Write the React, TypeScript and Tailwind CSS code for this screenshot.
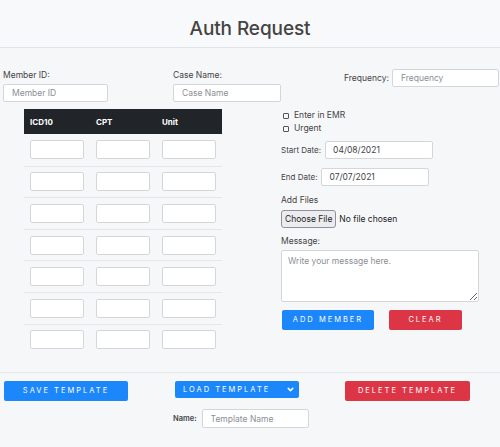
import { ChevronDown } from "lucide-react";

const rows = [0, 1, 2, 3, 4, 5, 6];

function TextInput({ placeholder, className }: { placeholder?: string; className: string }) {
  return (
    <input
      placeholder={placeholder}
      className={`bg-white border border-[#d3d7dc] rounded-[2px] px-[8px] text-[8.5px] text-[#555] placeholder:text-[#8a8f95] outline-none ${className}`}
    />
  );
}

export default function App() {
  return (
    <div className="w-[500px] h-[447px] bg-[#f6f7f9] font-['Inter',sans-serif] text-[#444] overflow-hidden">
      <header className="h-[48px] border-b border-[#dfe2e6] bg-[#f8f9fa] flex items-center justify-center pt-[11px]">
        <h1 className="text-[19px] font-medium text-[#444] tracking-[-0.1px]">Auth Request</h1>
      </header>

      {/* top fields */}
      <div className="flex items-start pt-[22px] h-[61px]">
        <div className="w-[173px] pl-[3px] flex flex-col">
          <label className="text-[8.5px] leading-[11px]">Member ID:</label>
          <TextInput placeholder="Member ID" className="mt-[3px] w-[105px] h-[18px]" />
        </div>
        <div className="w-[171px] flex flex-col">
          <label className="text-[8.5px] leading-[11px]">Case Name:</label>
          <TextInput placeholder="Case Name" className="mt-[3px] w-[108px] h-[18px]" />
        </div>
        <div className="flex items-center -mt-[1px]">
          <label className="text-[8.5px] mr-[3px]">Frequency:</label>
          <TextInput placeholder="Frequency" className="w-[107px] h-[18px]" />
        </div>
      </div>

      {/* main */}
      <div className="flex h-[263px]">
        <div className="w-[280px] pl-[24px]">
          <div className="w-[198px]">
            <div className="h-[25px] bg-[#212529] flex items-center text-white text-[8px] font-bold">
              <span className="w-[66px] pl-[6px]">ICD10</span>
              <span className="w-[66px] pl-[6px]">CPT</span>
              <span className="w-[66px] pl-[6px]">Unit</span>
            </div>
            {rows.map((r) => (
              <div
                key={r}
                className={`flex h-[31.6px] items-center ${r === 0 ? "" : "border-t border-[#e3e6ea]"}`}
              >
                <div className="w-[66px] pl-[6px]">
                  <input className="w-[54px] h-[19px] bg-white border border-[#d3d7dc] rounded-[2px]" />
                </div>
                <div className="w-[66px] pl-[6px]">
                  <input className="w-[54px] h-[19px] bg-white border border-[#d3d7dc] rounded-[2px]" />
                </div>
                <div className="w-[66px] pl-[6px]">
                  <input className="w-[54px] h-[19px] bg-white border border-[#d3d7dc] rounded-[2px]" />
                </div>
              </div>
            ))}
          </div>
        </div>

        <div className="flex flex-col pl-[1px]">
          <div className="flex flex-col text-[8.5px] leading-[13px] pl-[2px]">
            <label className="flex items-center">
              <span className="w-[6px] h-[6px] border border-[#555] rounded-[1px] mr-[5px]" />
              Enter in EMR
            </label>
            <label className="flex items-center">
              <span className="w-[6px] h-[6px] border border-[#555] rounded-[1px] mr-[5px]" />
              Urgent
            </label>
          </div>
          <div className="flex items-center mt-[6px]">
            <label className="text-[8px] mr-[4px]">Start Date:</label>
            <div className="w-[108px] h-[18px] bg-white border border-[#d3d7dc] rounded-[2px] px-[7px] flex items-center text-[8.5px] text-[#444]">
              04/08/2021
            </div>
          </div>
          <div className="flex items-center mt-[9px]">
            <label className="text-[8px] mr-[4px]">End Date:</label>
            <div className="w-[108px] h-[18px] bg-white border border-[#d3d7dc] rounded-[2px] px-[7px] flex items-center text-[8.5px] text-[#444]">
              07/07/2021
            </div>
          </div>
          <label className="text-[8.5px] mt-[9px] leading-[11px]">Add Files</label>
          <div className="flex items-center mt-[4px]">
            <span className="h-[18px] px-[3px] flex items-center bg-[#ececef] border border-[#8f8f9d] rounded-[3px] text-[8.5px] text-[#222]">
              Choose File
            </span>
            <span className="text-[8.5px] text-[#222] ml-[3px]">No file chosen</span>
          </div>
          <label className="text-[8.5px] mt-[8px] leading-[11px]">Message:</label>
          <textarea
            placeholder="Write your message here."
            className="mt-[3px] w-[198px] h-[52px] bg-white border border-[#d3d7dc] rounded-[2px] px-[6px] py-[4px] text-[8.5px] placeholder:text-[#8a8f95] outline-none resize"
          />
          <div className="flex mt-[8px] pl-[1px]">
            <button className="w-[92px] h-[20px] bg-[#1c86fb] rounded-[2px] text-white text-[7.5px] tracking-[2px] uppercase">
              Add Member
            </button>
            <button className="w-[73px] h-[20px] ml-[15px] bg-[#dc3545] rounded-[2px] text-white text-[7.5px] tracking-[2px] uppercase">
              Clear
            </button>
          </div>
        </div>
      </div>

      {/* bottom */}
      <div className="border-t border-[#e3e6ea] pt-[8px]">
        <div className="flex items-start">
          <button className="ml-[4px] w-[124px] h-[20px] bg-[#1c86fb] rounded-[2px] text-white text-[7.5px] tracking-[2px] uppercase">
            Save Template
          </button>
          <div className="ml-[47px] w-[124px] h-[17px] bg-[#1c86fb] rounded-[2px] text-white text-[7.5px] tracking-[2px] uppercase flex items-center pl-[8px] pr-[4px]">
            <span className="flex-1">Load Template</span>
            <ChevronDown className="w-[9px] h-[9px]" strokeWidth={4} />
          </div>
          <button className="ml-[46px] w-[125px] h-[20px] bg-[#dc3545] rounded-[2px] text-white text-[7.5px] tracking-[2px] uppercase">
            Delete Template
          </button>
        </div>
        <div className="flex items-center mt-[8px] pl-[173px]">
          <label className="text-[7.5px] font-semibold text-[#444] mr-[5px]">Name:</label>
          <TextInput placeholder="Template Name" className="w-[107px] h-[19px]" />
        </div>
      </div>
    </div>
  );
}
